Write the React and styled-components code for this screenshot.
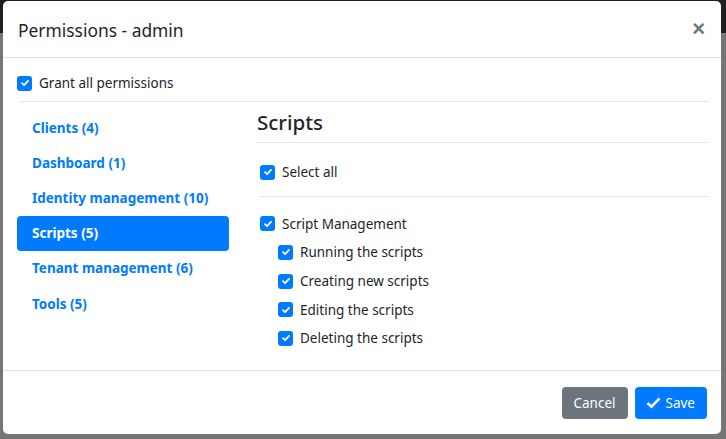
import React from 'react';
import styled, {createGlobalStyle} from 'styled-components';

const Global = createGlobalStyle`
  html, body {
    margin: 0;
    padding: 0;
    height: 100%;
    font-family: "Noto Sans", "Open Sans", sans-serif;
    color: #212529;
  }
  #root { height: 100%; }
`;

const Backdrop = styled.div`
  width: 726px;
  height: 439px;
  box-sizing: border-box;
  padding: 1px 5px 5px 3px;
  background: linear-gradient(#1f1f1f 0, #1f1f1f 33px, #767676 33px, #767676 100%);
  overflow: hidden;
`;

const Modal = styled.div`
  background: #fff;
  border-radius: 5px;
  height: 433px;
  display: flex;
  flex-direction: column;
  overflow: hidden;
`;

const Header = styled.div`
  flex: none;
  display: flex;
  align-items: center;
  justify-content: space-between;
  height: 56px;
  padding: 0 16px 0 15px;
  border-bottom: 1px solid #dee2e6;
`;

const Title = styled.h5`
  margin: 0;
  font-size: 17.4px;
  font-weight: 400;
  padding-top: 2px;
`;

const Close = styled.button`
  border: 0;
  background: none;
  padding: 0;
  font-size: 22px;
  line-height: 1;
  color: #6c757d;
  font-weight: 600;
  font-family: "Liberation Sans", sans-serif;
`;

const Body = styled.div`
  flex: 1;
  min-height: 0;
  overflow: hidden;
  padding: 11px 12px 0 14px;
`;

const Rule = styled.div`
  height: 1px;
  background: #e3e5e8;
  margin: ${p => p.$m || '0'};
`;

const Check = styled.div`
  display: flex;
  align-items: center;
  gap: 7px;
  font-size: 13.5px;
  box-sizing: border-box;
  height: ${p => p.$h || 28.7}px;
  padding-left: ${p => p.$indent || 0}px;
  padding-top: ${p => p.$top || 0}px;
`;

const Box = styled.span`
  width: 15px;
  height: 15px;
  border-radius: 3px;
  background: #007bff;
  display: inline-flex;
  align-items: center;
  justify-content: center;
  flex: none;
`;

const Columns = styled.div`
  display: grid;
  grid-template-columns: 212px 1fr;
  gap: 28px;
  padding-top: 8px;
`;

const Nav = styled.div`
  display: flex;
  flex-direction: column;
`;

const NavItem = styled.div`
  height: 35.2px;
  display: flex;
  align-items: center;
  padding-left: 15px;
  border-radius: 4px;
  font-size: 13.5px;
  font-weight: 700;
  color: ${p => (p.$active ? '#fff' : '#007bff')};
  background: ${p => (p.$active ? '#007bff' : 'transparent')};
`;

const Section = styled.div`
  display: flex;
  flex-direction: column;
`;

const Heading = styled.h4`
  margin: 0;
  font-size: 20.5px;
  font-weight: 500;
  height: 32px;
  line-height: 24px;
`;

const Footer = styled.div`
  flex: none;
  height: 63px;
  border-top: 1px solid #dee2e6;
  display: flex;
  align-items: center;
  justify-content: flex-end;
  gap: 7px;
  padding: 0 14px 0 0;
`;

const Button = styled.button`
  height: 32px;
  border: 0;
  border-radius: 4px;
  padding: 0 12px 0 ${p => (p.$primary ? 11 : 12)}px;
  font-size: 13.5px;
  font-family: inherit;
  color: #fff;
  background: ${p => (p.$primary ? '#007bff' : '#6c757d')};
  display: inline-flex;
  align-items: center;
  gap: 5px;
`;

const Tick = ({size = 10}) => (
  <svg width={size} height={size} viewBox="0 0 10 10">
    <path d="M2 5.2 L4.1 7.2 L8 2.9" fill="none" stroke="#fff" strokeWidth="1.8" strokeLinecap="round" strokeLinejoin="round" />
  </svg>
);

const CheckItem = ({children, indent, h, top}) => (
  <Check $indent={indent} $h={h} $top={top}>
    <Box><Tick /></Box>
    {children}
  </Check>
);

const navItems = [
  'Clients (4)',
  'Dashboard (1)',
  'Identity management (10)',
  'Scripts (5)',
  'Tenant management (6)',
  'Tools (5)',
];

const perms = [
  'Running the scripts',
  'Creating new scripts',
  'Editing the scripts',
  'Deleting the scripts',
];

export default function App() {
  return (
    <>
      <Global />
      <Backdrop>
        <Modal>
          <Header>
            <Title>Permissions - admin</Title>
            <Close>×</Close>
          </Header>
          <Body>
            <CheckItem h={28}>Grant all permissions</CheckItem>
            <Rule $m="4px 0 0 3px" />
            <Columns>
              <Nav>
                {navItems.map(n => (
                  <NavItem key={n} $active={n.startsWith('Scripts')}>{n}</NavItem>
                ))}
              </Nav>
              <Section>
                <Heading>Scripts</Heading>
                <Rule />
                <CheckItem indent={3} h={53} top={5}>Select all</CheckItem>
                <Rule $m="0 0 0 3px" />
                <CheckItem indent={3} h={41} top={12}>Script Management</CheckItem>
                {perms.map(p => (
                  <CheckItem key={p} indent={21}>{p}</CheckItem>
                ))}
              </Section>
            </Columns>
          </Body>
          <Footer>
            <Button>Cancel</Button>
            <Button $primary>
              <svg width="15" height="13" viewBox="0 0 16 14">
                <path d="M1.5 7.5 L5.8 11.5 L14.5 2.5" fill="none" stroke="#fff" strokeWidth="2.8" strokeLinejoin="miter" />
              </svg>
              Save
            </Button>
          </Footer>
        </Modal>
      </Backdrop>
    </>
  );
}
